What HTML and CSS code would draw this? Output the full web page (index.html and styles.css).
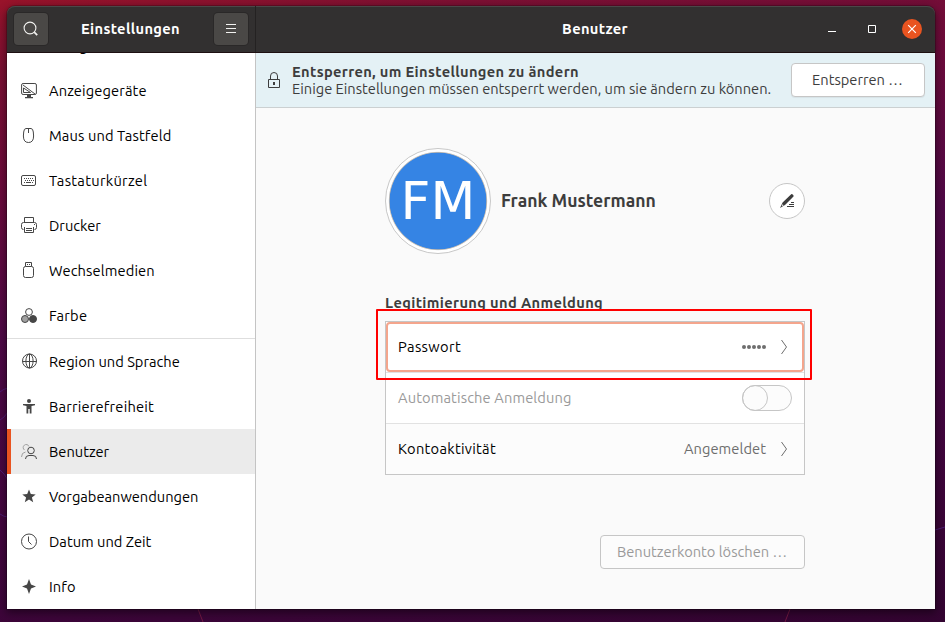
FILE: index.html
```
<!DOCTYPE html>
<html lang="de">
<head>
<meta charset="utf-8">
<title>Einstellungen</title>
<link rel="stylesheet" href="styles.css">
</head>
<body>
<svg class="wallpaper" viewBox="0 0 945 622" fill="none" aria-hidden="true">
  <path d="M0 392q3-3 8-4M0 420q4-2 8-8M0 470q4 3 8 10M0 514q4 3 8 3M935 530l10-3" stroke="#52258a" stroke-opacity=".7"/>
  <path d="M198 609l5 13M790 609l-5 13" stroke="#8c2148" stroke-opacity=".7"/>
</svg>
<div class="window">
  <header class="titlebar">
    <div class="titlebar-side">
      <button class="tool"><svg width="16" height="16" viewBox="0 0 16 16" fill="none" stroke="#f2f2f0"><circle cx="7" cy="7" r="5.9" stroke-width="1.1"/><path d="M11.2 11.2l3 3" stroke-width="1.7"/></svg></button>
      <h1>Einstellungen</h1>
      <button class="tool"><svg width="16" height="16" viewBox="0 0 16 16" fill="none" stroke="#f2f2f0"><path d="M3 3.5h10M3 7.5h10M3 11.5h10"/></svg></button>
    </div>
    <div class="titlebar-main">
      <h1>Benutzer</h1>
      <div class="controls">
        <svg width="16" height="16" viewBox="0 0 16 16"><path d="M4 10.5h8" stroke="#fff"/></svg>
        <svg width="16" height="16" viewBox="0 0 16 16"><path d="M4.5 4.5h7v7h-7z" fill="none" stroke="#fff"/></svg>
        <span class="close"><svg width="16" height="16" viewBox="0 0 16 16"><path d="M4.2 4.2l7.6 7.6M11.8 4.2l-7.6 7.6" stroke="#fff" stroke-width="1.2"/></svg></span>
      </div>
    </div>
  </header>
  <div class="body">
    <nav class="sidebar">
      <a class="item"><span class="glyph"></span><span>Energie</span></a>
      <a class="item"><svg class="glyph" viewBox="0 0 16 16" fill="none" stroke="#464646"><rect x=".6" y=".5" width="14.8" height="11" rx="1.5"/><path d="M2 2l12 9M2.5 5v4.5h7z"/><path d="M6 12h4v2h2v1.2H4V14h2z" fill="#464646" stroke="none"/></svg><span class="wide">Anzeigegeräte</span></a>
      <a class="item"><svg class="glyph" viewBox="0 0 16 16" fill="none" stroke="#464646"><path d="M5 .5h5Q12 .5 12.300 4L12.600 8Q12.600 14.500 7.500 14.500T2.400 8L2.700 4Q3 .5 5 .5zM7.500 1v4"/></svg><span class="wide">Maus und Tastfeld</span></a>
      <a class="item"><svg class="glyph" viewBox="0 0 16 16" fill="none" stroke="#464646"><rect x=".5" y="2.500" width="14" height="10" rx="1.500"/><path d="M3 5.500h10M4 7.500h9" stroke-dasharray="1 1"/><path d="M3 9.500h1m1 0h5m1 0h1"/></svg><span class="wider">Tastaturkürzel</span></a>
      <a class="item"><svg class="glyph" viewBox="0 0 16 16" fill="none" stroke="#464646"><path d="M3.500 4V-.5h9V4M2.500 11.500Q.5 11.500.5 9.500V6.500Q.5 4.500 2.500 4.500h11Q15.500 4.500 15.500 6.500v3Q15.500 11.500 13.500 11.500M3.500 9v5.500h9V9M5 10.500h6M5 12.500h6M13 6.500h1"/></svg><span>Drucker</span></a>
      <a class="item"><svg class="glyph" viewBox="0 0 16 16" fill="none" stroke="#464646"><path d="M4.500 3.500V-.5h6V3.500M6 1.500h1m1 0h1"/><rect x="2.500" y="3.500" width="10" height="11" rx="2"/></svg><span class="wide">Wechselmedien</span></a>
      <a class="item"><svg class="glyph" viewBox="0 0 16 16" stroke="#464646"><circle cx="8" cy="4" r="3.400" fill="#fff"/><circle cx="4" cy="11" r="3.500" fill="#a0a0a0"/><circle cx="12" cy="11" r="3.500" fill="#464646"/></svg><span class="wider">Farbe</span></a>
      <a class="item divided"><svg class="glyph" viewBox="0 0 16 16" fill="none" stroke="#464646"><circle cx="8.500" cy="7" r="7"/><ellipse cx="8.500" cy="7" rx="3.600" ry="7"/><path d="M8.500 0v14M1.500 7.500h14"/></svg><span>Region und Sprache</span></a>
      <a class="item"><svg class="glyph" viewBox="0 0 16 16" fill="#464646"><circle cx="8" cy="2" r="2"/><path d="M2 5h12v1.200l-3.500.8v7.500H8.700V10H7.300v4.500H5.500V7L2 6.200z"/></svg><span class="medium">Barrierefreiheit</span></a>
      <a class="item active"><svg class="glyph" viewBox="0 0 16 16" fill="none"><path d="M8 2.500A3 3 0 1 0 3.500 6M.5 13Q.5 8.500 4.500 8" stroke="#a0a0a0"/><circle cx="10" cy="6.500" r="3.300" stroke="#464646"/><path d="M4.500 15Q4.500 11.500 8 11.500h4Q15.500 11.500 15.500 15" stroke="#464646"/></svg><span>Benutzer</span></a>
      <a class="item"><svg class="glyph" viewBox="0 0 16 16" fill="#464646"><path d="M8 .5l1.800 4.600 4.900.3-3.800 3.100 1.300 4.800L8 10.600l-4.200 2.700 1.300-4.800-3.800-3.100 4.900-.3z"/></svg><span>Vorgabeanwendungen</span></a>
      <a class="item"><svg class="glyph" viewBox="0 0 16 16" fill="none" stroke="#464646"><circle cx="8" cy="7.500" r="7.500"/><path d="M7.500 2.500v5l3 3"/></svg><span>Datum und Zeit</span></a>
      <a class="item"><svg class="glyph" viewBox="0 0 16 16" fill="#464646"><path d="M8 0l2 5.400L15 7.500l-5 2.100L8 15 6 9.600 1 7.500l5-2.100z"/></svg><span class="wide">Info</span></a>
    </nav>
    <main class="content">
      <section class="banner">
        <svg class="lock" width="16" height="18" viewBox="0 0 16 18" fill="none" stroke="#3d3d3d"><path d="M4.500 8V5Q4.500 1.500 8 1.500T11.500 5v3M2.500 8.500h11v8h-11z"/><path d="M7 11h2v3H7z" fill="#3d3d3d" stroke="none"/></svg>
        <div class="banner-text">
          <strong>Entsperren, um Einstellungen zu ändern</strong>
          <span>Einige Einstellungen müssen entsperrt werden, um sie ändern zu können.</span>
        </div>
        <button class="button unlock">Entsperren …</button>
      </section>
      <div class="page">
        <div class="profile">
          <div class="avatar"><span>FM</span></div>
          <h2>Frank Mustermann</h2>
          <button class="edit"><svg width="16" height="16" viewBox="0 0 16 16" fill="#3d3d3d"><path d="M12.200 1.200Q13 .8 14 1.800T14.500 3.600L6 12 1 15l2.600-5.400zM3.500 11.200l-.8 2 1.900-1z" fill-rule="evenodd"/><path d="M12 9h3v1h-3zM10 11h5v1h-5zM8 13h7v1H8z"/></svg></button>
        </div>
        <h3>Legitimierung und Anmeldung</h3>
        <div class="list">
          <div class="row focused">
            <span class="spaced">Passwort</span>
            <span class="dots"><i></i><i></i><i></i><i></i><i></i></span>
            <svg class="chevron" viewBox="0 0 8 16"><path d="M1.500 1l5 7-5 7" fill="none" stroke="#6e6e6e"/></svg>
            <div class="marker"></div>
          </div>
          <div class="row disabled">
            <span class="wide">Automatische Anmeldung</span>
            <span class="switch"></span>
          </div>
          <div class="row">
            <span class="wider">Kontoaktivität</span>
            <span class="value">Angemeldet</span>
            <svg class="chevron" viewBox="0 0 8 16"><path d="M1.500 1l5 7-5 7" fill="none" stroke="#6e6e6e"/></svg>
          </div>
        </div>
        <button class="button delete">Benutzerkonto löschen …</button>
      </div>
    </main>
  </div>
</div>
</body>
</html>
```
FILE: styles.css
```
*, *::before { box-sizing: border-box; }

body {
  margin: 0;
  width: 945px;
  height: 622px;
  padding: 6px 10px 13px 7px;
  overflow: hidden;
  font: 14.67px/17px Ubuntu, "Open Sans", "Noto Sans", sans-serif;
  color: #3d3d3d;
  background: linear-gradient(172deg, #99132a 0%, #7c1033 9%, #6d0b3b 24%, #4f0947 45%, #43063f 70%, #330431 100%);
}

h1, h2, h3 { margin: 0; font-size: inherit; }
button { font: inherit; color: inherit; padding: 0; }
svg { display: block; flex: none; }

.wallpaper { position: absolute; left: 0; top: 0; width: 945px; height: 622px; }

.window {
  position: relative;
  display: flex;
  flex-direction: column;
  height: 603px;
  border-radius: 8px 8px 0 0;
  box-shadow: 0 0 0 1px rgba(0, 0, 0, .2), 0 3px 9px 1px rgba(0, 0, 0, .45);
}

.titlebar {
  display: flex;
  height: 47px;
  background: #323030;
  border-radius: 8px 8px 0 0;
  border-bottom: 1px solid #1d1012;
  box-shadow: inset 0 1px #4a4848;
  color: #fff;
}
.titlebar h1 { flex: 1; padding: 0 1px 2px 0; text-align: center; letter-spacing: .35px; }
.titlebar-side {
  display: flex;
  align-items: center;
  width: 249px;
  padding: 0 7px 0 7px;
  border-right: 1px solid #242222;
}
.tool {
  display: flex;
  align-items: center;
  justify-content: center;
  width: 34px;
  height: 32px;
  border: 0;
  border-radius: 4px;
  background: #4a4846;
  box-shadow: 0 0 0 1px #2a2828;
}
.titlebar-main { display: flex; align-items: center; flex: 1; }
.titlebar-main h1 { padding-left: 111px; }
.controls { display: flex; align-items: center; gap: 24px; padding-right: 13px; }
.close {
  display: flex;
  align-items: center;
  justify-content: center;
  width: 20px;
  height: 20px;
  margin-left: -2px;
  border-radius: 50%;
  background: #e95420;
}

.body { display: flex; flex: 1; min-height: 0; }

.sidebar {
  display: flex;
  flex-direction: column;
  justify-content: flex-end;
  width: 249px;
  overflow: hidden;
  background: #fff;
  border-right: 1px solid #c4c4c4;
  color: #000;
}
.item {
  display: flex;
  flex: none;
  align-items: center;
  gap: 12px;
  height: 45px;
  padding-left: 14px;
}
.glyph { width: 16px; height: 16px; overflow: visible; }
.divided { height: 46px; border-top: 1px solid #dedede; }
.active { background: #ebebeb; padding-left: 10px; border-left: 4px solid #e95420; }

.wide { letter-spacing: .12px; }
.medium { letter-spacing: .2px; }
.wider { letter-spacing: .29px; }
.spaced { letter-spacing: .36px; }

.content { display: flex; flex-direction: column; flex: 1; background: #fafafa; }

.banner {
  display: flex;
  align-items: center;
  height: 55px;
  padding: 0 10px;
  background: #e4f1f5;
  border-bottom: 1px solid #cbd0d1;
}
.banner-text { display: flex; flex: 1; flex-direction: column; margin-left: 10px; white-space: nowrap; }
.banner-text strong { letter-spacing: .34px; }

.button {
  height: 34px;
  padding: 0 1px 2px 0;
  border: 1px solid #c6c6c6;
  border-radius: 4px;
  background: #fff;
}
.unlock { width: 134px; box-shadow: 0 1px 1px rgba(0, 0, 0, .06); }

.page { display: flex; flex-direction: column; width: 420px; margin-left: 129px; }

.profile { display: flex; align-items: center; margin-top: 40px; }
.avatar {
  display: flex;
  align-items: center;
  justify-content: center;
  width: 106px;
  height: 106px;
  border: 1px solid #c8c8c8;
  border-radius: 50%;
  background: radial-gradient(circle closest-side, #3584e4 48px, #b4b4b4 48.6px, #fff 49.6px);
  color: #fff;
  font: 52px/60px "DejaVu Sans", sans-serif;
}
.profile h2 { flex: 1; margin-left: 10px; font-size: 17.6px; line-height: 20px; }
.edit {
  display: flex;
  align-items: center;
  justify-content: center;
  width: 36px;
  height: 36px;
  border: 1px solid #c6c6c6;
  border-radius: 50%;
  background: #fff;
}

.page h3 { margin-top: 40px; letter-spacing: .36px; }

.list { margin-top: 10px; border: 1px solid #c6c6c6; background: #fcfcfc; }
.row {
  position: relative;
  display: flex;
  align-items: center;
  height: 51px;
  padding: 0 17px 1px 12px;
  border-bottom: 1px solid #e2e2e2;
  color: #000;
}
.row:last-child { height: 50px; border-bottom: 0; }
.row > :first-child { flex: 1; }
.row.focused, .row.disabled { background: #fff; }
.row.disabled { color: #9a9a9a; padding: 0 12px 1px 12px; }
.focused::before {
  content: "";
  position: absolute;
  inset: 0;
  border: 2px solid #f4a58c;
  border-radius: 4px;
}
.marker {
  position: absolute;
  z-index: 1;
  left: -10px;
  top: -13px;
  width: 436px;
  height: 71px;
  border: 2px solid #f00;
  border-radius: 1px;
}
.dots { display: flex; gap: 1px; }
.dots i { width: 4px; height: 4px; border-radius: 50%; background: #6e6e6e; }
.value { color: #6e6e6e; letter-spacing: .06px; }
.chevron { width: 8px; height: 16px; margin-left: 14px; margin-right: -1px; }
.switch {
  width: 50px;
  height: 26px;
  border: 1px solid #c6c6c6;
  border-radius: 13px;
  background: #fcfcfc;
}
.switch::before {
  content: "";
  display: block;
  width: 26px;
  height: 26px;
  margin: -1px;
  border: 1px solid #c6c6c6;
  border-radius: 50%;
}

.delete { align-self: flex-end; width: 205px; margin-top: 60px; color: #9a9a9a; background: #fcfcfc; }
```
